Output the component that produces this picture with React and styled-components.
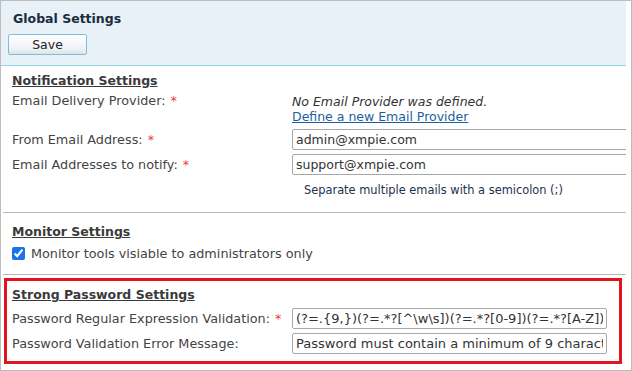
import React from "react";
import styled, { createGlobalStyle } from "styled-components";

const GlobalStyle = createGlobalStyle`
  body {
    margin: 0;
    background: #fff;
    font-family: "DejaVu Sans", Verdana, sans-serif;
  }
`;

const Frame = styled.div`
  box-sizing: border-box;
  width: 632px;
  height: 371px;
  border: 1px solid #bdbdbd;
  padding-right: 5px;
  overflow: hidden;
`;

const Header = styled.div`
  height: 65px;
  background: #e7f1f7;
  border-bottom: 1px solid #8fd6e6;
  padding: 10px 0 0 7px;
  box-sizing: border-box;
`;

const Title = styled.div`
  font-weight: bold;
  font-size: 12.5px;
  color: #1c2c3c;
  padding-left: 5px;
  height: 23px;
`;

const SaveButton = styled.button`
  width: 79px;
  height: 21px;
  border: 1px solid #7fc0d6;
  border-radius: 2px;
  background: linear-gradient(#ffffff, #f0f3f5 70%, #dde3e7);
  font-family: inherit;
  font-size: 12.5px;
  color: #222;
  padding: 0;
`;

const Section = styled.div`
  padding: ${(p) => p.pad || "7px 0 0 9px"};
  border-bottom: 1px solid #b8b8b8;
  margin-left: 2px;
  height: ${(p) => p.h}px;
  box-sizing: border-box;
`;

const Highlight = styled.div`
  margin: 3px 4px 0 3px;
  border: 3px solid #e2141e;
  height: 86px;
  box-sizing: border-box;
  padding: 6px 0 0 5px;
`;

const Heading = styled.div`
  font-weight: bold;
  font-size: 12.5px;
  color: #3a3a3a;
  text-decoration: underline;
  margin-bottom: ${(p) => p.mb || 5}px;
`;

const Row = styled.div`
  display: grid;
  grid-template-columns: ${(p) => p.col || 280}px 1fr;
  align-items: ${(p) => p.align || "center"};
  min-height: ${(p) => p.h || 22}px;
  margin-bottom: 3px;
`;

const Label = styled.div`
  font-size: 12.8px;
  color: #444;
  white-space: nowrap;
`;

const Star = styled.span`
  color: #e8413f;
  margin-left: 5px;
`;

const Field = styled.div`
  overflow: hidden;
  min-width: 0;
`;

const Info = styled.div`
  font-size: 12.5px;
  color: #333;
  font-style: italic;
  line-height: 15px;
  padding-top: 1px;
`;

const Link = styled.a`
  font-size: 12.5px;
  color: #1d5f9e;
  text-decoration: underline;
  line-height: 15px;
  display: block;
`;

const Input = styled.input`
  box-sizing: border-box;
  width: ${(p) => p.w}px;
  height: 21px;
  border: 1px solid #a8a8a8;
  border-radius: 2px;
  padding: 0 3px;
  font-family: inherit;
  font-size: ${(p) => p.fs || 12.5}px;
  color: #333;
  display: block;
`;

const Hint = styled.div`
  font-size: 11.4px;
  color: #1c3350;
  padding: 5px 0 0 292px;
`;

const CheckRow = styled.label`
  display: flex;
  align-items: center;
  gap: 6px;
  font-size: 12.8px;
  color: #444;
`;

const Check = styled.input`
  width: 13px;
  height: 13px;
  margin: 0;
  accent-color: #1a73e8;
`;

export default function App() {
  return (
    <>
      <GlobalStyle />
      <Frame>
        <Header>
          <Title>Global Settings</Title>
          <SaveButton>Save</SaveButton>
        </Header>
        <Section h={147}>
          <Heading>Notification Settings</Heading>
          <Row align="start" h={32}>
            <Label>
              Email Delivery Provider:<Star>*</Star>
            </Label>
            <div>
              <Info>No Email Provider was defined.</Info>
              <Link href="#">Define a new Email Provider</Link>
            </div>
          </Row>
          <Row>
            <Label>
              From Email Address:<Star>*</Star>
            </Label>
            <Field>
              <Input w={360} defaultValue="admin@xmpie.com" />
            </Field>
          </Row>
          <Row>
            <Label>
              Email Addresses to notify:<Star>*</Star>
            </Label>
            <Field>
              <Input w={360} defaultValue="support@xmpie.com" />
            </Field>
          </Row>
          <Hint>Separate multiple emails with a semicolon (;)</Hint>
        </Section>
        <Section h={62} pad="11px 0 0 9px">
          <Heading mb={7}>Monitor Settings</Heading>
          <CheckRow>
            <Check type="checkbox" defaultChecked />
            Monitor tools visiable to administrators only
          </CheckRow>
        </Section>
        <Highlight>
          <Heading>Strong Password Settings</Heading>
          <Row>
            <Label>
              Password Regular Expression Validation:<Star>*</Star>
            </Label>
            <Input
              w={315}
              fs={13}
              defaultValue="(?=.{9,})(?=.*?[^\w\s])(?=.*?[0-9])(?=.*?[A-Z])(?=.*?[a-z]).*$"
            />
          </Row>
          <Row>
            <Label>Password Validation Error Message:</Label>
            <Input
              w={315}
              fs={13}
              defaultValue="Password must contain a minimum of 9 characters"
            />
          </Row>
        </Highlight>
      </Frame>
    </>
  );
}
